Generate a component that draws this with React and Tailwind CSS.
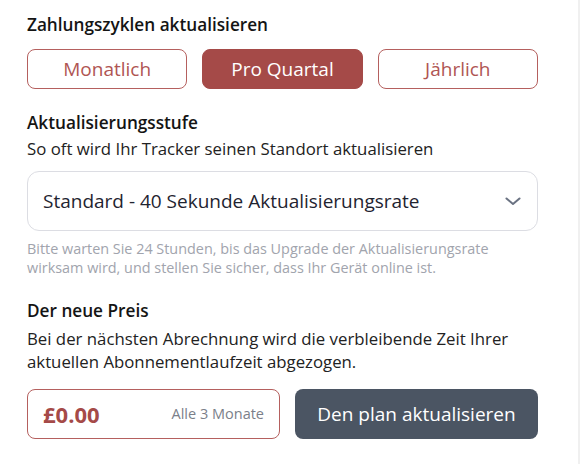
const cycles = [
  { label: 'Monatlich', active: false },
  { label: 'Pro Quartal', active: true },
  { label: 'Jährlich', active: false },
];

function Chevron() {
  return (
    <svg width="16" height="9" viewBox="0 0 16 9" fill="none" className="text-gray-500">
      <polyline points="1.5,1.5 8,7 14.5,1.5" stroke="currentColor" strokeWidth="2" strokeLinecap="round" strokeLinejoin="round" />
    </svg>
  );
}

export default function App() {
  return (
    <div className="flex h-[464px] w-[580px] bg-white font-['Open_Sans',sans-serif]">
      <div className="flex-1 pl-[27px] pt-[11px]">
        <div className="w-[511px]">
          <h2 className="text-[17.2px] font-semibold leading-7 text-[#141414]">Zahlungszyklen aktualisieren</h2>

          <div className="mt-[10px] grid grid-cols-3 gap-[15px]">
            {cycles.map((c) => (
              <button
                key={c.label}
                className={`h-10 rounded-lg text-[19px] ${
                  c.active
                    ? 'bg-[#a54a48] text-white border border-[#a54a48]'
                    : 'bg-white text-[#b05553] border border-[#b5605e]'
                }`}
              >
                {c.label}
              </button>
            ))}
          </div>

          <h2 className="mt-5 text-[17.2px] font-semibold leading-7 text-[#141414]">Aktualisierungsstufe</h2>
          <p className="text-[16.8px] leading-6 text-[#222]">So oft wird Ihr Tracker seinen Standort aktualisieren</p>

          <div className="mt-[10px] flex h-[60px] items-center justify-between rounded-xl border border-[#dcdde3] pl-[15px] pr-[16px]">
            <span className="text-[19px] text-[#1f2430]">Standard - 40 Sekunde Aktualisierungsrate</span>
            <Chevron />
          </div>

          <p className="mt-[8px] text-[14.4px] leading-[19px] text-[#a1a4ad]">
            Bitte warten Sie 24 Stunden, bis das Upgrade der Aktualisierungsrate
            <br />
            wirksam wird, und stellen Sie sicher, dass Ihr Gerät online ist.
          </p>

          <h2 className="mt-[20px] text-[17.2px] font-semibold leading-7 text-[#141414]">Der neue Preis</h2>
          <p className="mt-[2px] text-[16.8px] leading-[23px] text-[#222]">
            Bei der nächsten Abrechnung wird die verbleibende Zeit Ihrer
            <br />
            aktuellen Abonnementlaufzeit abgezogen.
          </p>

          <div className="mt-[16px] flex gap-[15px]">
            <div className="flex h-[50px] w-[253px] items-center justify-between rounded-lg border border-[#b5605e] pl-[15px] pr-[15px]">
              <span className="text-[22px] font-bold text-[#a54a48]">£0.00</span>
              <span className="text-[14.5px] text-[#7b7f8a]">Alle 3 Monate</span>
            </div>
            <button className="h-[50px] flex-1 rounded-lg bg-[#4b5563] text-[19px] text-white">
              Den plan aktualisieren
            </button>
          </div>
        </div>
      </div>
      <div className="w-[2px] bg-[#f0f0f0]" />
    </div>
  );
}
